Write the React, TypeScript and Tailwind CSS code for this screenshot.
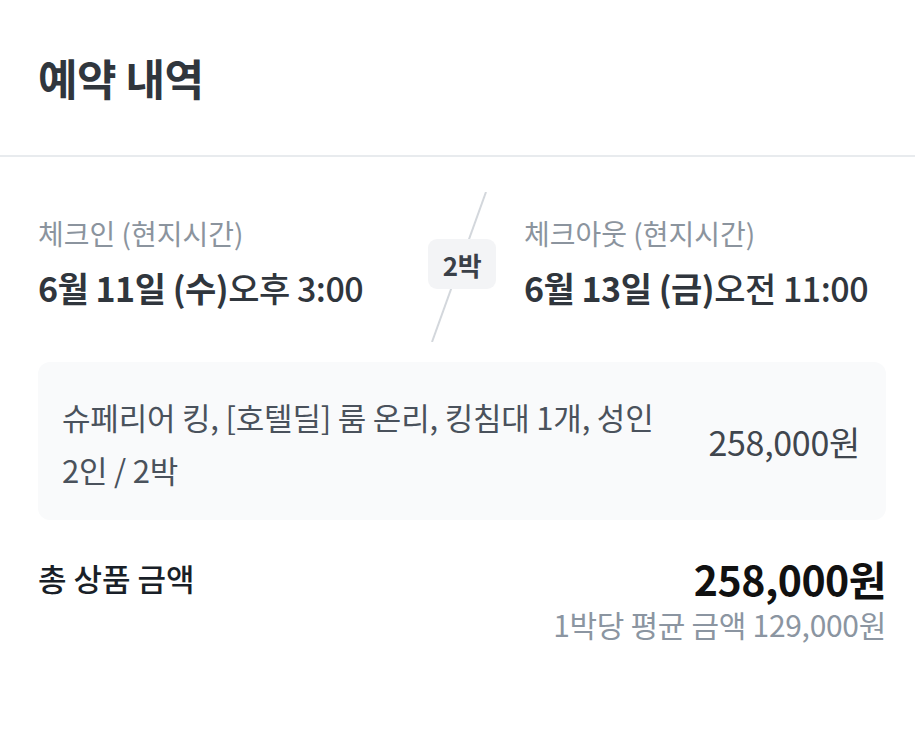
const font = { fontFamily: '"Noto Sans CJK KR", "Noto Sans", sans-serif' };

function StayTime({
  label,
  date,
  time,
}: {
  label: string;
  date: string;
  time: string;
}) {
  return (
    <div className="flex flex-col pb-[9px]">
      <span className="text-[28px] leading-[36px] text-[#8b949e] whitespace-nowrap">{label}</span>
      <span className="mt-[15px] text-[34px] leading-[44px] tracking-[-0.5px] text-[#30363d] whitespace-nowrap">
        <span className="font-bold">{date}</span>
        <span className="font-medium">{time}</span>
      </span>
    </div>
  );
}

export default function App() {
  return (
    <div className="min-h-screen w-full bg-white" style={font}>
      <header className="flex h-[155px] items-center px-[38px]">
        <h1 className="text-[43px] font-bold leading-none tracking-[-0.5px] text-[#30363d]">
          예약 내역
        </h1>
      </header>
      <div className="h-[2px] w-full bg-[#e8ebee]" />

      <main className="pl-[38px] pr-[29px] pt-[35px]">
        <div className="grid grid-cols-[1fr_68px_1fr] items-center gap-x-[28px]">
          <StayTime label="체크인 (현지시간)" date="6월 11일 (수)" time="오후 3:00" />
          <div className="relative flex h-[150px] items-center justify-center">
            <svg
              className="absolute inset-0"
              width="68"
              height="150"
              viewBox="0 0 68 150"
            >
              <line x1="58" y1="0" x2="4" y2="150" stroke="#d3d7dc" strokeWidth="2" />
            </svg>
            <div className="relative -mt-[6px] flex h-[50px] w-[68px] items-center justify-center rounded-[9px] bg-[#f3f4f6] text-[26px] font-bold tracking-[-0.5px] text-[#3a4048]">
              2박
            </div>
          </div>
          <StayTime label="체크아웃 (현지시간)" date="6월 13일 (금)" time="오전 11:00" />
        </div>

        <div className="mt-[20px] flex h-[158px] items-center justify-between rounded-[12px] bg-[#f9fafb] pl-[24px] pr-[26px]">
          <p className="pt-[4px] text-[31px] leading-[53px] tracking-[-0.2px] text-[#4a525c] whitespace-nowrap">
            슈페리어 킹, [호텔딜] 룸 온리, 킹침대 1개, 성인
            <br />
            2인 / 2박
          </p>
          <span className="text-[34px] tracking-[-0.3px] text-[#40464e] whitespace-nowrap">258,000원</span>
        </div>

        <div className="mt-[36px] flex items-center justify-between">
          <span className="text-[31px] font-medium leading-[44px] text-[#191f28]">
            총 상품 금액
          </span>
          <span className="text-[41px] font-bold leading-[44px] tracking-[-0.5px] text-[#111111]">
            258,000원
          </span>
        </div>
        <div className="mt-[4px] text-right text-[30px] leading-[40px] tracking-[-0.3px] text-[#8b95a1]">
          1박당 평균 금액 129,000원
        </div>
      </main>
    </div>
  );
}
